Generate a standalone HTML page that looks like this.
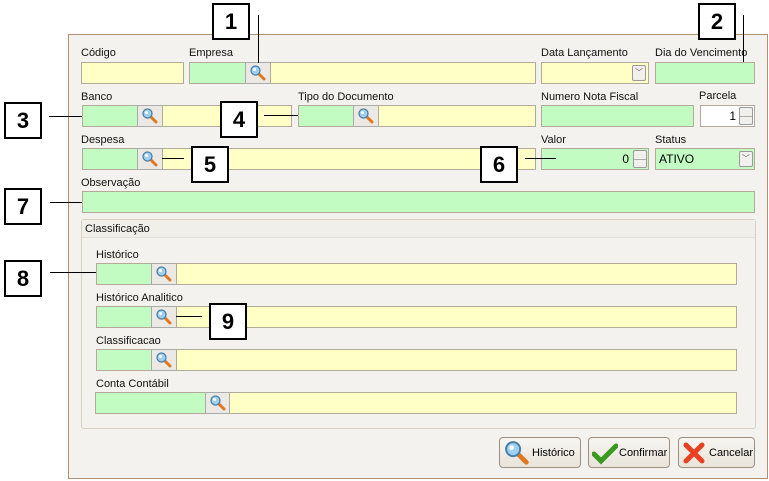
<!DOCTYPE html>
<html><head><meta charset="utf-8"><style>
*{margin:0;padding:0;box-sizing:border-box}
body{width:769px;height:481px;background:#fff;position:relative;overflow:hidden;font-family:"Liberation Sans",sans-serif;font-size:11px;color:#000}
.a{position:absolute}
.frame{left:68px;top:34px;width:700px;height:445px;background:#f4f2ee;border:1px solid #ad9273}
.l{position:absolute;font-size:11px;white-space:nowrap;color:#111}
.y,.g,.w,.b{position:absolute;border:1px solid #b4aa9a;height:22px}
.y{background:#ffffc6}
.g{background:#c2fcc2}
.w{background:#fff}
.b{background:#ece9e4;border-color:#aaa}
.box{position:absolute;width:38px;height:37px;border:2px solid #000;background:#fff;font:bold 22px "Liberation Sans",sans-serif;text-align:center;line-height:33px}
.ln{position:absolute;background:#000}
.grp{left:81px;top:219px;width:675px;height:210px;border:1px solid #d8d0c2;border-radius:3px;background:#f4f2ee}
.gh{left:82px;top:220px;width:673px;height:18px;background:#f1efe9;border-bottom:1px solid #e4ded4}
.btn{position:absolute;top:437px;height:31px;border:1px solid #9e9080;border-radius:4px;background:linear-gradient(#f8f6f2,#e8e3da);font-size:11px}
.btn span{position:absolute;top:9px}
.spin{position:absolute;width:14px;height:18px;border:1px solid #9a9a9a;border-radius:2px;background:#f2f0ec}
.spin:before{content:"";position:absolute;left:0;right:0;top:8px;border-top:1px solid #aaa}
.dd{position:absolute;width:14px;height:16px;border:1px solid #9a9a9a;border-radius:2px;background:#f2f0ec;font-size:8px;text-align:center;line-height:14px;color:#555}
</style></head><body>
<div class="a frame"></div>

<svg width="0" height="0" style="position:absolute"><defs>
<g id="mg"><line x1="9" y1="9" x2="15" y2="15" stroke="#e07820" stroke-width="3" stroke-linecap="round"/><circle cx="6.5" cy="6.5" r="4.5" fill="#9fd0f0" stroke="#4a7fa8" stroke-width="1.3"/><circle cx="5.5" cy="5.5" r="1.5" fill="#fff"/></g>
</defs></svg>

<div class="l" style="left:81px;top:47px">Código</div>
<div class="y" style="left:81px;top:62px;width:103px"></div>
<div class="l" style="left:189px;top:47px">Empresa</div>
<div class="g" style="left:189px;top:62px;width:57px"></div>
<div class="b" style="left:245px;top:62px;width:26px"><svg width="18" height="18" style="position:absolute;left:3px;top:1px"><use href="#mg"/></svg></div>
<div class="y" style="left:270px;top:62px;width:266px"></div>
<div class="l" style="left:541px;top:47px">Data Lançamento</div>
<div class="y" style="left:541px;top:62px;width:108px"><div class="dd" style="left:90px;top:2px">﹀</div></div>
<div class="l" style="left:655px;top:47px">Dia do Vencimento</div>
<div class="g" style="left:655px;top:62px;width:100px"></div>

<div class="l" style="left:81px;top:91px">Banco</div>
<div class="g" style="left:82px;top:105px;width:56px"></div>
<div class="b" style="left:137px;top:105px;width:26px"><svg width="18" height="18" style="position:absolute;left:3px;top:1px"><use href="#mg"/></svg></div>
<div class="y" style="left:162px;top:105px;width:130px"></div>
<div class="l" style="left:298px;top:91px">Tipo do Documento</div>
<div class="g" style="left:298px;top:105px;width:56px"></div>
<div class="b" style="left:353px;top:105px;width:26px"><svg width="18" height="18" style="position:absolute;left:3px;top:1px"><use href="#mg"/></svg></div>
<div class="y" style="left:378px;top:105px;width:158px"></div>
<div class="l" style="left:541px;top:91px">Numero Nota Fiscal</div>
<div class="g" style="left:541px;top:105px;width:153px"></div>
<div class="l" style="left:699px;top:90px">Parcela</div>
<div class="w" style="left:700px;top:105px;width:55px"><span style="position:absolute;right:18px;top:3px;font-size:12px">1</span><div class="spin" style="left:38px;top:1px"></div></div>

<div class="l" style="left:81px;top:134px">Despesa</div>
<div class="g" style="left:82px;top:148px;width:56px"></div>
<div class="b" style="left:137px;top:148px;width:26px"><svg width="18" height="18" style="position:absolute;left:3px;top:1px"><use href="#mg"/></svg></div>
<div class="y" style="left:162px;top:148px;width:374px"></div>
<div class="l" style="left:541px;top:134px">Valor</div>
<div class="g" style="left:541px;top:148px;width:108px"><span style="position:absolute;right:19px;top:3px;font-size:12px">0</span><div class="spin" style="left:91px;top:1px"></div></div>
<div class="l" style="left:655px;top:134px">Status</div>
<div class="g" style="left:655px;top:148px;width:100px"><span style="position:absolute;left:3px;top:3px;font-size:12px">ATIVO</span><div class="dd" style="left:83px;top:2px">﹀</div></div>

<div class="l" style="left:81px;top:177px">Observação</div>
<div class="g" style="left:82px;top:191px;width:673px"></div>

<div class="a grp"></div>
<div class="a gh"></div>
<div class="l" style="left:85px;top:223px">Classificação</div>

<div class="l" style="left:96px;top:249px">Histórico</div>
<div class="g" style="left:96px;top:263px;width:56px"></div>
<div class="b" style="left:151px;top:263px;width:26px"><svg width="18" height="18" style="position:absolute;left:3px;top:1px"><use href="#mg"/></svg></div>
<div class="y" style="left:176px;top:263px;width:561px"></div>

<div class="l" style="left:96px;top:292px">Histórico Analitico</div>
<div class="g" style="left:96px;top:306px;width:56px"></div>
<div class="b" style="left:151px;top:306px;width:26px"><svg width="18" height="18" style="position:absolute;left:3px;top:1px"><use href="#mg"/></svg></div>
<div class="y" style="left:176px;top:306px;width:561px"></div>

<div class="l" style="left:96px;top:335px">Classificacao</div>
<div class="g" style="left:96px;top:349px;width:56px"></div>
<div class="b" style="left:151px;top:349px;width:26px"><svg width="18" height="18" style="position:absolute;left:3px;top:1px"><use href="#mg"/></svg></div>
<div class="y" style="left:176px;top:349px;width:561px"></div>

<div class="l" style="left:96px;top:378px">Conta Contábil</div>
<div class="g" style="left:95px;top:392px;width:111px"></div>
<div class="b" style="left:205px;top:392px;width:25px"><svg width="18" height="18" style="position:absolute;left:3px;top:1px"><use href="#mg"/></svg></div>
<div class="y" style="left:229px;top:392px;width:508px"></div>

<div class="btn" style="left:499px;width:82px"><svg width="28" height="28" viewBox="0 0 18 18" style="position:absolute;left:3px;top:1px"><use href="#mg"/></svg><span style="left:32px">Histórico</span></div>
<div class="btn" style="left:588px;width:82px"><svg width="26" height="22" style="position:absolute;left:3px;top:5px"><path d="M2 11 L9 18 L24 3" stroke="#3a9a20" stroke-width="5" fill="none" stroke-linecap="round"/></svg><span style="left:30px">Confirmar</span></div>
<div class="btn" style="left:678px;width:77px"><svg width="24" height="24" style="position:absolute;left:3px;top:3px"><path d="M4 4 L20 20 M20 4 L4 20" stroke="#e84020" stroke-width="5" stroke-linecap="round"/></svg><span style="left:30px">Cancelar</span></div>

<div class="box" style="left:212px;top:3px">1</div><div class="ln" style="left:258px;top:15px;width:1px;height:48px"></div>
<div class="box" style="left:698px;top:3px">2</div><div class="ln" style="left:743px;top:15px;width:1px;height:47px"></div>
<div class="box" style="left:4px;top:102px">3</div><div class="ln" style="left:49px;top:116px;width:33px;height:1px"></div>
<div class="box" style="left:220px;top:101px">4</div><div class="ln" style="left:264px;top:115px;width:34px;height:1px"></div>
<div class="box" style="left:191px;top:146px">5</div><div class="ln" style="left:162px;top:158px;width:22px;height:1px"></div>
<div class="box" style="left:480px;top:146px">6</div><div class="ln" style="left:525px;top:158px;width:31px;height:1px"></div>
<div class="box" style="left:4px;top:188px">7</div><div class="ln" style="left:50px;top:202px;width:32px;height:1px"></div>
<div class="box" style="left:4px;top:260px">8</div><div class="ln" style="left:50px;top:272px;width:46px;height:1px"></div>
<div class="box" style="left:209px;top:303px">9</div><div class="ln" style="left:176px;top:316px;width:26px;height:1px"></div>
</body></html>
